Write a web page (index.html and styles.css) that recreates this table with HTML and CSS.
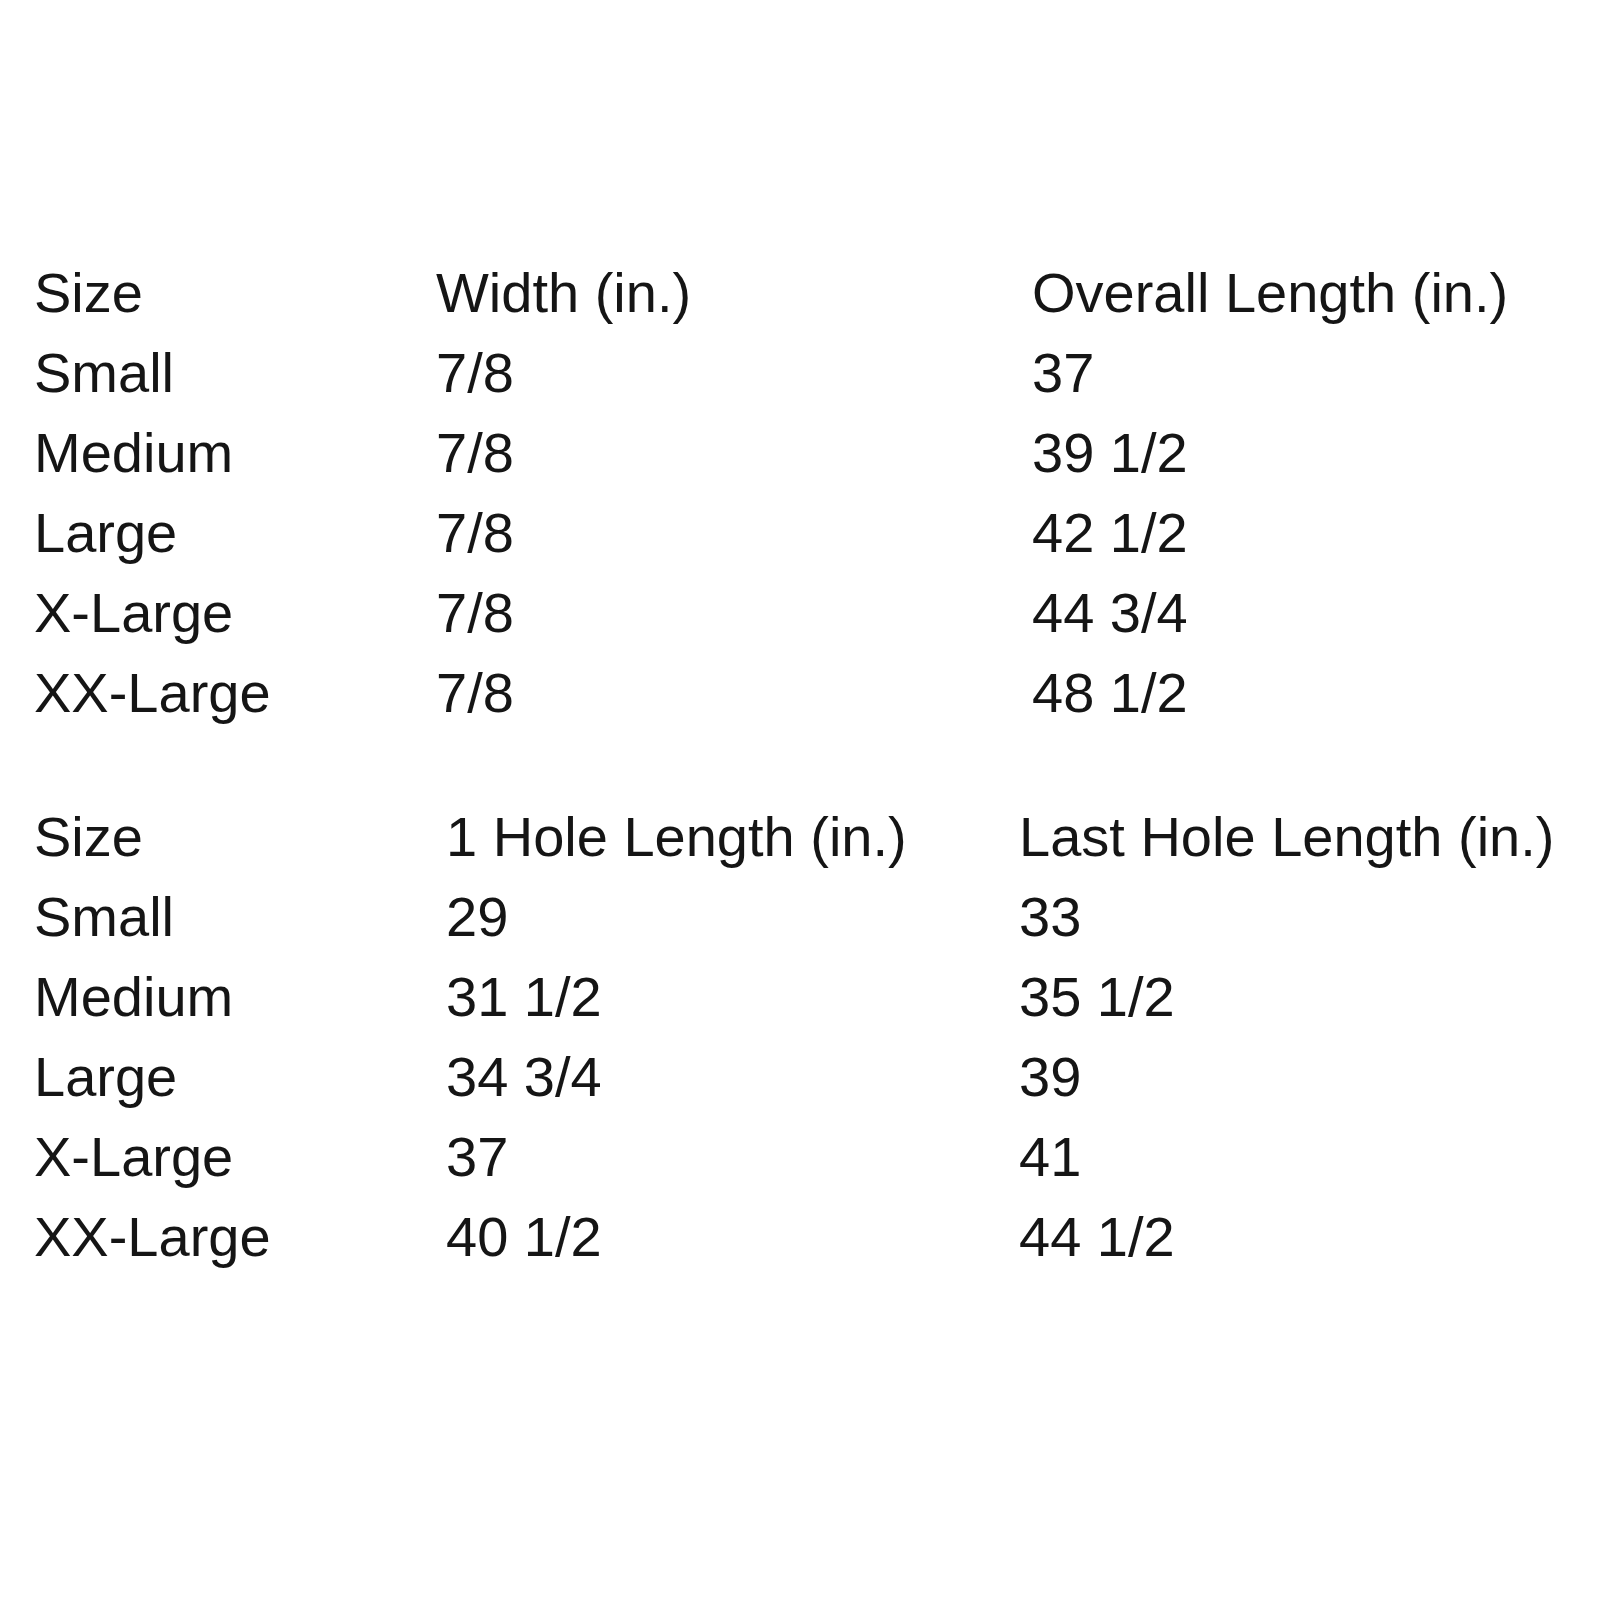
FILE: index.html
```html
<!DOCTYPE html>
<html lang="en">
<head>
<meta charset="utf-8">
<title>Size Chart</title>
<link rel="stylesheet" href="styles.css">
</head>
<body>
<main class="page">
  <section class="chart chart-a">
    <div>Size</div><div>Width (in.)</div><div>Overall Length (in.)</div>
    <div>Small</div><div>7/8</div><div>37</div>
    <div>Medium</div><div>7/8</div><div>39 1/2</div>
    <div>Large</div><div>7/8</div><div>42 1/2</div>
    <div>X-Large</div><div>7/8</div><div>44 3/4</div>
    <div>XX-Large</div><div>7/8</div><div>48 1/2</div>
  </section>
  <section class="chart chart-b">
    <div>Size</div><div>1 Hole Length (in.)</div><div>Last Hole Length (in.)</div>
    <div>Small</div><div>29</div><div>33</div>
    <div>Medium</div><div>31 1/2</div><div>35 1/2</div>
    <div>Large</div><div>34 3/4</div><div>39</div>
    <div>X-Large</div><div>37</div><div>41</div>
    <div>XX-Large</div><div>40 1/2</div><div>44 1/2</div>
  </section>
</main>
</body>
</html>
```
FILE: styles.css
```css
html, body {
  margin: 0;
  padding: 0;
  background: #ffffff;
}
body {
  width: 1600px;
  height: 1600px;
  overflow: hidden;
  font-family: "Liberation Sans", Arial, sans-serif;
  font-size: 56px;
  color: #151515;
}
.page {
  padding: 253px 0 0 34px;
  display: flex;
  flex-direction: column;
  gap: 64px;
}
.chart {
  display: grid;
  grid-auto-rows: 80px;
  line-height: 80px;
  white-space: nowrap;
}
.chart-a {
  grid-template-columns: 402px 596px 1fr;
}
.chart-b {
  grid-template-columns: 412px 573px 1fr;
}
```
